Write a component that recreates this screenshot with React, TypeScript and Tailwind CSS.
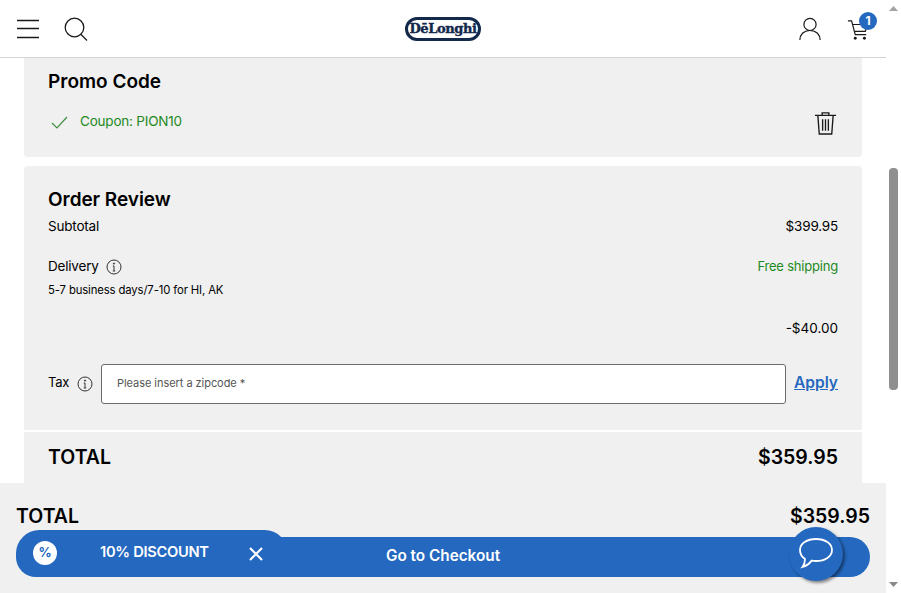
import React from "react";

const font = { fontFamily: "Inter, 'Liberation Sans', sans-serif" };

function Info() {
  return (
    <svg width="16" height="16" viewBox="0 0 16 16" fill="none" stroke="#333" strokeWidth="1">
      <circle cx="8" cy="8" r="7" />
      <path d="M8 7v5M6.800 12h2.400M6.800 7H8" />
      <circle cx="8" cy="4.600" r="0.600" fill="#333" />
    </svg>
  );
}

function Scrollbar() {
  return (
    <div className="w-[15px] h-full bg-white flex flex-col items-center justify-between py-[6px] relative">
      <svg width="9" height="6" viewBox="0 0 9 6"><path d="M4.500 0L9 5H0z" fill="#a3a3a3" /></svg>
      <div className="absolute top-[168px] left-[3px] w-[9px] h-[222px] rounded-[4px] bg-[#8f8f8f]" />
      <svg width="9" height="6" viewBox="0 0 9 6"><path d="M4.500 6L0 1h9z" fill="#8a8a8a" /></svg>
    </div>
  );
}

function Header() {
  return (
    <header className="h-[58px] shrink-0 border-b border-[#d4d4d4] bg-white flex items-center justify-between pl-[16px] pr-[9px] relative">
      <div className="flex items-center gap-[24px]">
        <svg width="24" height="20" viewBox="0 0 24 20" fill="none" stroke="#1a1a1a" strokeWidth="1.500">
          <path d="M1 1.500h22M1 9.500h22M1 18.500h22" />
        </svg>
        <svg width="24" height="24" viewBox="0 0 24 24" fill="none" stroke="#1a1a1a" strokeWidth="1.300">
          <circle cx="10.500" cy="10.500" r="9.300" />
          <path d="M17 17.500l6 6" />
        </svg>
      </div>
      <div className="absolute left-[405px] top-[17px] w-[76px] h-[24px] rounded-full border-[3px] border-[#13294b] flex items-center justify-center">
        <span className="text-[13px] font-black text-[#13294b] tracking-[-0.4px] [-webkit-text-stroke:0.4px_#13294b]" style={{ fontFamily: "'DejaVu Serif', serif" }}>DēLonghi</span>
      </div>
      <div className="flex items-center gap-[25px]">
        <svg width="24" height="24" viewBox="0 0 24 26" fill="none" stroke="#1a1a1a" strokeWidth="1.300">
          <circle cx="12" cy="8" r="6.600" />
          <path d="M1 25c0-6 4-10.400 11-10.400S23 19 23 25" />
        </svg>
        <div className="relative w-[30px] h-[30px]">
          <svg className="absolute left-0 top-[5px]" width="22" height="22" viewBox="0 0 24 24" fill="none" stroke="#1a1a1a" strokeWidth="1.300">
            <path d="M1 2h4l4 15h12" />
            <path d="M6 6h16l-2 7.500H8" />
            <circle cx="9" cy="21" r="1.600" fill="#1a1a1a" stroke="none" />
            <circle cx="19" cy="21" r="1.600" fill="#1a1a1a" stroke="none" />
          </svg>
          <div className="absolute left-[12px] top-[-2px] w-[18px] h-[18px] rounded-full bg-[#2468bf] flex items-center justify-center text-white text-[12px] font-bold leading-none">1</div>
        </div>
      </div>
    </header>
  );
}

function PromoCard() {
  return (
    <section className="h-[99px] bg-[#f0f0f0] rounded-b-[4px] px-[24px] pt-[12px] relative">
      <h2 className="text-[19px] leading-[24px] font-semibold text-black">Promo Code</h2>
      <div className="flex items-center justify-between mt-[14px]">
        <div className="flex items-center gap-[11px] pl-[1px]">
          <svg width="20" height="16" viewBox="0 0 20 16" fill="none" stroke="#3f8f3f" strokeWidth="1.200">
            <path d="M3 9l5 5L18 3" />
          </svg>
          <span className="text-[13.500px] leading-[18px] text-[#1e8a1e] tracking-[-0.2px] -mt-[3px]">Coupon: PION10</span>
        </div>
        <svg className="mr-[1px] mt-[2px]" width="23" height="26" viewBox="0 0 24 26" fill="none" stroke="#1a1a1a" strokeWidth="1.400">
          <path d="M1 5h22M8.500 5V2.500h7V5" />
          <path d="M4 5l1.500 19.500h13L20 5" />
          <path d="M9 9v12M12 9v12M15 9v12" />
        </svg>
      </div>
    </section>
  );
}

function OrderReview() {
  return (
    <section className="mt-[9px] h-[264px] bg-[#f0f0f0] rounded-t-[4px] px-[24px] pt-[22px] text-black">
      <h2 className="text-[19px] leading-[24px] font-semibold tracking-[-0.05px]">Order Review</h2>
      <div className="flex justify-between text-[13.500px] leading-[18px] mt-[5px] tracking-[-0.2px]">
        <span>Subtotal</span>
        <span>$399.95</span>
      </div>
      <div className="flex justify-between text-[13.500px] leading-[18px] mt-[22px] tracking-[-0.2px]">
        <span className="flex items-center gap-[7px]">Delivery <span className="pt-[2px]"><Info /></span></span>
        <span className="text-[#1e8a1e] text-[13px]">Free shipping</span>
      </div>
      <div className="text-[11.300px] leading-[16px] mt-[7px] tracking-[-0.12px]">5-7 business days/7-10 for HI, AK</div>
      <div className="text-right text-[13.500px] leading-[18px] mt-[21px]">-$40.00</div>
      <div className="flex items-center mt-[27px]">
        <span className="w-[21px] text-[13px] leading-[18px] tracking-[-0.2px] -mt-[4px]">Tax</span>
        <span className="ml-[8px] mr-[8px]"><Info /></span>
        <div className="flex-1 h-[40px] rounded-[3px] border border-[#6b6b6b] bg-white flex items-center pl-[15px] pb-[2px] text-[11px] text-[#555] tracking-[-0.05px]">Please insert a zipcode *</div>
        <a className="ml-[8px] -mt-[2px] text-[15.500px] font-semibold text-[#2468bf] underline">Apply</a>
      </div>
    </section>
  );
}

function TotalRow() {
  return (
    <section className="mt-[2px] h-[60px] bg-[#f0f0f0] px-[24px] pt-[13px] flex justify-between items-start text-black text-[19.500px] leading-[24px] font-semibold">
      <span>TOTAL</span>
      <span>$359.95</span>
    </section>
  );
}

function BottomBar() {
  return (
    <div className="absolute left-0 bottom-0 w-[886px] h-[110px] bg-[#f0f0f0] px-[16px] pt-[21px]">
      <div className="flex justify-between text-black text-[19.500px] leading-[24px] font-semibold">
        <span>TOTAL</span>
        <span>$359.95</span>
      </div>
      <div className="mt-[9px] h-[40px] rounded-full bg-[#2468bf] flex items-center justify-center text-white text-[15.300px] font-semibold pb-[2px]">Go to Checkout</div>
      <div className="absolute left-[16px] top-[47px] w-[272px] h-[47px] rounded-full bg-[#2468bf] flex items-center text-white pl-[17px]">
        <div className="w-[24px] h-[24px] -mt-[1px] rounded-full bg-white flex items-center justify-center text-[#2468bf] text-[13px] font-bold">%</div>
        <span className="ml-[43px] -mt-[2px] text-[14.700px] font-semibold tracking-[-0.3px]">10% DISCOUNT</span>
        <svg className="ml-[39px]" width="16" height="16" viewBox="0 0 16 16" fill="none" stroke="white" strokeWidth="2.200">
          <path d="M2 2l12 12M14 2L2 14" />
        </svg>
      </div>
      <div className="absolute left-[789px] top-[44px] w-[54px] h-[54px] rounded-full bg-[#2468bf] shadow-[2px_2px_3px_rgba(0,0,0,0.45)] flex items-center justify-center">
        <svg width="36" height="34" viewBox="0 0 36 34" fill="none" stroke="white" strokeWidth="1.800">
          <path d="M18 2c9 0 16 4.500 16 11s-7 11-16 11c-1.500 0-3-.1-4.400-.4C11.500 26.500 8 29 4.500 30c1.500-2 2.500-4.500 2.500-8C4 20 2 16.800 2 13 2 6.500 9 2 18 2z" />
        </svg>
      </div>
    </div>
  );
}

export default function App() {
  return (
    <div className="relative w-[901px] h-[593px] overflow-hidden bg-white flex" style={font}>
      <div className="w-[886px] flex flex-col">
        <Header />
        <main className="px-[24px]">
          <PromoCard />
          <OrderReview />
          <TotalRow />
        </main>
      </div>
      <Scrollbar />
      <BottomBar />
    </div>
  );
}
